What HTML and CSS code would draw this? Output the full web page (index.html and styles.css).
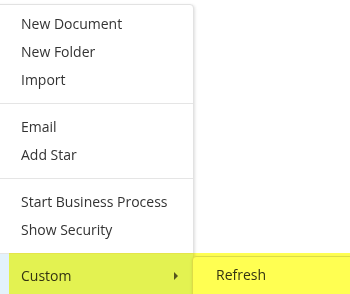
FILE: index.html
```html
<!DOCTYPE html>
<html lang="en">
<head>
  <meta charset="UTF-8">
  <title>Context Menu</title>
  <link rel="stylesheet" href="styles.css">
</head>
<body>

  <div class="menu">
    <div class="menu-item">New Document</div>
    <div class="menu-item">New Folder</div>
    <div class="menu-item">Import</div>
    <div class="separator"></div>
    <div class="menu-item">Email</div>
    <div class="menu-item">Add Star</div>
    <div class="separator"></div>
    <div class="menu-item">Start Business Process</div>
    <div class="menu-item">Show Security</div>
    <div class="separator tight"></div>
    <div class="menu-item active">
      Custom
      <span class="arrow"></span>
      <div class="submenu">
        <div class="menu-item">Refresh</div>
      </div>
    </div>
  </div>

  <div class="highlight"></div>

</body>
</html>
```

FILE: styles.css
```css
body {
  margin: 0;
  width: 350px;
  height: 294px;
  overflow: hidden;
  background-color: #fff;
  font-family: 'Open Sans', sans-serif;
  font-size: 14px;
  color: #333;
  position: relative;
}

.menu {
  width: 200px;
  margin: 4px 0 0 -8px;
  padding-top: 5px;
  background-color: #fff;
  border: 1px solid #e2e2e2;
  border-radius: 4px;
  box-shadow: 1px 1px 3px rgba(0, 0, 0, 0.12);
}

.menu-item {
  height: 28px;
  line-height: 28px;
  padding-left: 28px;
  white-space: nowrap;
}

.separator {
  height: 1px;
  margin: 9px 0;
  background-color: #e5e5e5;
}

.separator.tight {
  margin-bottom: 0;
}

.menu-item.active {
  position: relative;
  height: 40px;
  padding-top: 8px;
  box-sizing: border-box;
  background-color: #e3f2fb;
}

.arrow {
  position: absolute;
  left: 181px;
  top: 18px;
  width: 0;
  height: 0;
  border-top: 4px solid transparent;
  border-bottom: 4px solid transparent;
  border-left: 4px solid #555;
}

.submenu {
  position: absolute;
  left: 199px;
  top: 2px;
  width: 170px;
  height: 60px;
  padding-top: 4px;
  background-color: #fff;
  border: 1px solid #dcdcdc;
  border-radius: 4px;
  box-shadow: 0 1px 3px rgba(0, 0, 0, 0.1);
}

.submenu .menu-item {
  padding-left: 23px;
}

.highlight {
  position: absolute;
  left: 9px;
  top: 253px;
  width: 341px;
  height: 41px;
  background-color: #ffff52;
  mix-blend-mode: multiply;
}
```
